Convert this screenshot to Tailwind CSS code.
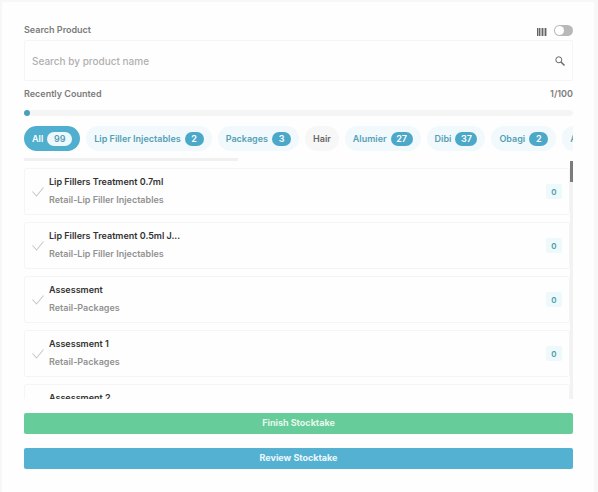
<!DOCTYPE html>
<html lang="en">
<head>
<meta charset="utf-8">
<meta name="viewport" content="width=device-width, initial-scale=1">
<title>Stocktake</title>
<script src="https://cdn.jsdelivr.net/npm/@tailwindcss/browser@4"></script>
</head>
<body class="bg-[#f7f7f7] font-['Inter','Liberation_Sans',sans-serif] text-[9px] leading-3 font-medium text-[#7c7c7c]">
<main class="mt-0.5 ml-0.5 mr-1 flex h-[calc(100vh-2px)] flex-col bg-[#fefefe] pt-5 pr-[21px] pb-[23px] pl-[22px]">

  <div class="flex h-4 items-center justify-between">
    <label for="search" class="font-semibold">Search Product</label>
    <label for="scan" class="flex items-center gap-[7px]" aria-label="Barcode scanner">
      <svg class="mt-1 h-2 w-2.5" viewBox="0 0 10 8" fill="#555" aria-hidden="true">
        <path d="M0 0h10v8H0z" opacity=".4"/><path d="M0 0h1v8H0zM2 0h1v8H2zM5 0h1v8H5zM8 0h1v8H8z" opacity=".85"/>
      </svg>
      <input id="scan" type="checkbox" class="flex h-[11px] w-[19px] appearance-none items-center rounded-full bg-[#b8b8b8] px-px before:size-[9px] before:rounded-full before:bg-white before:content-[''] checked:justify-end checked:bg-[#50b0d0]">
    </label>
  </div>

  <div class="mt-0.5 flex h-[41px] items-center rounded-xs border border-[#f5f5f5] pr-[7px] pl-[7px]">
    <input id="search" type="text" placeholder="Search by product name" class="min-w-0 flex-1 bg-transparent text-[10px] leading-4 font-medium outline-none placeholder:text-[#b0b0b0]">
    <button type="button" aria-label="Search" class="text-[#666]">
      <svg class="size-[10px]" viewBox="0 0 10 10" fill="none" stroke="currentColor" aria-hidden="true"><circle cx="3.8" cy="3.8" r="3"/><path d="M6 6l3.5 3.5" stroke-width="1.4"/></svg>
    </button>
  </div>

  <div class="mt-[7px] flex justify-between font-semibold"><span>Recently Counted</span><span>1/100</span></div>
  <div class="mt-2.5 flex h-[6px] items-center rounded-full bg-[#f5f5f5]" role="progressbar" aria-label="Recently counted" aria-valuenow="1" aria-valuemin="0" aria-valuemax="100">
    <div class="size-[6px] rounded-full bg-[#4a9fbf]"></div>
  </div>

  <div class="mt-2.5 flex shrink-0 gap-1.5 overflow-hidden font-semibold text-[#559fb7]">
    <button type="button" class="flex h-[25px] shrink-0 items-center gap-1 rounded-full bg-[#50aece] px-2 text-white">All <span class="flex h-3.5 w-[25px] items-center justify-center rounded-full bg-[#eef9fd] text-[#559fb7]">99</span></button>
    <button type="button" class="flex h-[25px] shrink-0 items-center gap-1 rounded-full bg-[#f1f9fc] px-2">Lip Filler Injectables <span class="flex h-3.5 w-[19px] items-center justify-center rounded-full bg-[#4ba8c9] text-white">2</span></button>
    <button type="button" class="flex h-[25px] shrink-0 items-center gap-1 rounded-full bg-[#f1f9fc] px-2">Packages <span class="flex h-3.5 w-[19px] items-center justify-center rounded-full bg-[#4ba8c9] text-white">3</span></button>
    <button type="button" class="flex h-[25px] shrink-0 items-center rounded-full bg-[#f7f7f7] px-2 text-[#666]">Hair</button>
    <button type="button" class="flex h-[25px] shrink-0 items-center gap-1 rounded-full bg-[#f1f9fc] px-2">Alumier <span class="flex h-3.5 w-[22px] items-center justify-center rounded-full bg-[#4ba8c9] text-white">27</span></button>
    <button type="button" class="flex h-[25px] shrink-0 items-center gap-1 rounded-full bg-[#f1f9fc] px-2">Dibi <span class="flex h-3.5 w-[22px] items-center justify-center rounded-full bg-[#4ba8c9] text-white">37</span></button>
    <button type="button" class="flex h-[25px] shrink-0 items-center gap-1 rounded-full bg-[#f1f9fc] px-2">Obagi <span class="flex h-3.5 w-[19px] items-center justify-center rounded-full bg-[#4ba8c9] text-white">2</span></button>
    <button type="button" class="flex h-[25px] shrink-0 items-center rounded-full bg-[#f1f9fc] px-2">A</button>
  </div>
  <div class="mt-[7px] h-[3px] w-[39%] shrink-0 bg-[#f0f0f0]"></div>

  <div class="flex min-h-0 flex-1">
    <ul class="flex min-w-0 flex-1 flex-col gap-[7px] overflow-hidden pt-[7px]">
      <li class="flex h-[47px] shrink-0 items-center rounded-xs border border-[#f5f5f5] px-[7px]">
        <svg class="mr-[5px] h-[11px] w-3 shrink-0" viewBox="0 0 12 11" fill="none" stroke="#c8c8c8" stroke-width="1.1" aria-hidden="true"><path d="M.5 5.5l4 4.5 7-8.5"/></svg>
        <div class="min-w-0 flex-1 pb-0.5 font-semibold"><p class="mb-1.5 text-[#333]">Lip Fillers Treatment 0.7ml</p><p class="text-[#929292]">Retail-Lip Filler Injectables</p></div>
        <span class="flex h-[15px] w-4 items-center justify-center rounded-xs bg-[#edf9fb] text-[8px] font-semibold text-[#4c9da8]">0</span>
      </li>
      <li class="flex h-[47px] shrink-0 items-center rounded-xs border border-[#f5f5f5] px-[7px]">
        <svg class="mr-[5px] h-[11px] w-3 shrink-0" viewBox="0 0 12 11" fill="none" stroke="#c8c8c8" stroke-width="1.1" aria-hidden="true"><path d="M.5 5.5l4 4.5 7-8.5"/></svg>
        <div class="min-w-0 flex-1 pb-0.5 font-semibold"><p class="mb-1.5 text-[#333]">Lip Fillers Treatment 0.5ml J...</p><p class="text-[#929292]">Retail-Lip Filler Injectables</p></div>
        <span class="flex h-[15px] w-4 items-center justify-center rounded-xs bg-[#edf9fb] text-[8px] font-semibold text-[#4c9da8]">0</span>
      </li>
      <li class="flex h-[47px] shrink-0 items-center rounded-xs border border-[#f5f5f5] px-[7px]">
        <svg class="mr-[5px] h-[11px] w-3 shrink-0" viewBox="0 0 12 11" fill="none" stroke="#c8c8c8" stroke-width="1.1" aria-hidden="true"><path d="M.5 5.5l4 4.5 7-8.5"/></svg>
        <div class="min-w-0 flex-1 pb-0.5 font-semibold"><p class="mb-1.5 text-[#333]">Assessment</p><p class="text-[#929292]">Retail-Packages</p></div>
        <span class="flex h-[15px] w-4 items-center justify-center rounded-xs bg-[#edf9fb] text-[8px] font-semibold text-[#4c9da8]">0</span>
      </li>
      <li class="flex h-[47px] shrink-0 items-center rounded-xs border border-[#f5f5f5] px-[7px]">
        <svg class="mr-[5px] h-[11px] w-3 shrink-0" viewBox="0 0 12 11" fill="none" stroke="#c8c8c8" stroke-width="1.1" aria-hidden="true"><path d="M.5 5.5l4 4.5 7-8.5"/></svg>
        <div class="min-w-0 flex-1 pb-0.5 font-semibold"><p class="mb-1.5 text-[#333]">Assessment 1</p><p class="text-[#929292]">Retail-Packages</p></div>
        <span class="flex h-[15px] w-4 items-center justify-center rounded-xs bg-[#edf9fb] text-[8px] font-semibold text-[#4c9da8]">0</span>
      </li>
      <li class="flex h-[47px] shrink-0 items-center rounded-xs border border-[#f5f5f5] px-[7px]">
        <svg class="mr-[5px] h-[11px] w-3 shrink-0" viewBox="0 0 12 11" fill="none" stroke="#c8c8c8" stroke-width="1.1" aria-hidden="true"><path d="M.5 5.5l4 4.5 7-8.5"/></svg>
        <div class="min-w-0 flex-1 pb-0.5 font-semibold"><p class="mb-1.5 text-[#333]">Assessment 2</p><p class="text-[#929292]">Retail-Packages</p></div>
        <span class="flex h-[15px] w-4 items-center justify-center rounded-xs bg-[#edf9fb] text-[8px] font-semibold text-[#4c9da8]">0</span>
      </li>
    </ul>
    <div class="w-[3px] bg-[#f2f2f2]"><div class="h-[21px] bg-[#7c7c7c]"></div></div>
  </div>

  <button type="button" class="mt-3.5 h-[21px] shrink-0 rounded-xs bg-[#66cc99] pb-0.5 font-bold text-[#e6f8ee]">Finish Stocktake</button>
  <button type="button" class="mt-3.5 h-[21px] shrink-0 rounded-xs bg-[#55b1d2] pb-0.5 font-bold text-[#edf8fc]">Review Stocktake</button>
</main>
</body>
</html>
